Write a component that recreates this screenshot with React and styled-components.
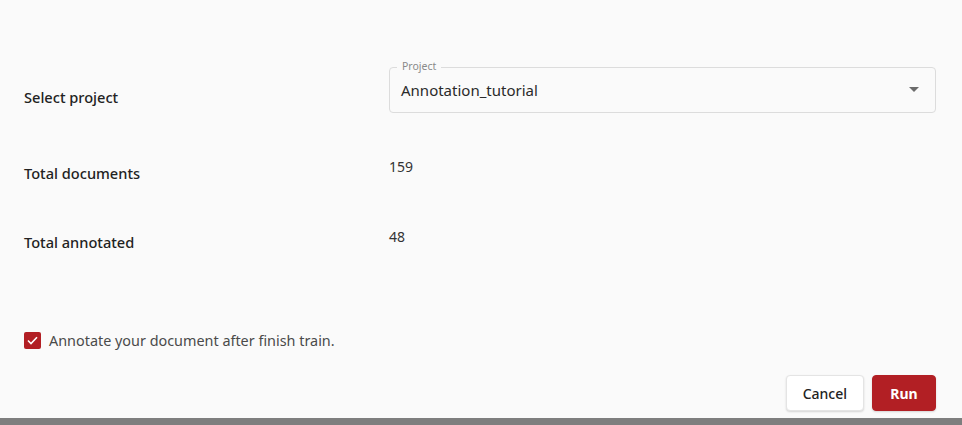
import React from "react";
import styled, { createGlobalStyle } from "styled-components";

const GlobalStyle = createGlobalStyle`
  html, body {
    margin: 0;
    padding: 0;
    background: #7e7e7e;
  }
  body {
    font-family: "Noto Sans", "Open Sans", Arial, sans-serif;
  }
`;

const Dialog = styled.div`
  box-sizing: border-box;
  width: 962px;
  height: 418px;
  background: #fafafa;
  padding: 67px 26px 7px 24px;
  display: flex;
  flex-direction: column;
`;

const Rows = styled.div`
  display: flex;
  flex-direction: column;
  gap: 44px;
`;

const Row = styled.div`
  display: flex;
  align-items: ${(p) => (p.center ? "center" : "flex-start")};
`;

const Label = styled.div`
  width: 365px;
  flex-shrink: 0;
  font-size: 14.6px;
  font-weight: 500;
  line-height: 20px;
  color: #222;
  padding-top: ${(p) => p.offset || 0}px;
`;

const Value = styled.div`
  font-size: 14px;
  line-height: 20px;
  color: #333;
`;

const SelectBox = styled.div`
  position: relative;
  flex: 1;
  height: 46px;
  box-sizing: border-box;
  border: 1px solid #dcdcdc;
  border-radius: 4px;
  display: flex;
  align-items: center;
  padding: 0 11px;
  font-size: 15px;
  color: #2a2a2a;
`;

const Legend = styled.span`
  position: absolute;
  top: -10px;
  left: 7px;
  padding: 0 5px;
  background: #fafafa;
  font-size: 10.5px;
  line-height: 16px;
  color: #8a8a8a;
`;

const Arrow = styled.svg`
  position: absolute;
  right: 16px;
  top: 19px;
`;

const CheckRow = styled.label`
  display: flex;
  align-items: center;
  gap: 8px;
  margin-top: 79px;
  font-size: 14.4px;
  color: #4a4a4a;
`;

const Box = styled.span`
  width: 17px;
  height: 17px;
  border-radius: 2px;
  background: #b21f24;
  display: flex;
  align-items: center;
  justify-content: center;
`;

const Footer = styled.div`
  margin-top: auto;
  display: flex;
  justify-content: flex-end;
  gap: 8px;
`;

const Button = styled.button`
  height: 36px;
  box-sizing: border-box;
  padding: 0 16px;
  border-radius: 4px;
  font-family: inherit;
  font-size: 14px;
  cursor: pointer;
  border: 1px solid ${(p) => (p.primary ? "#b21f24" : "#e4e4e4")};
  background: ${(p) => (p.primary ? "#b21f24" : "#ffffff")};
  color: ${(p) => (p.primary ? "#ffffff" : "#222")};
  font-weight: ${(p) => (p.primary ? 700 : 500)};
  min-width: ${(p) => (p.primary ? 64 : 75)}px;
  box-shadow: 0 1px 2px rgba(0, 0, 0, 0.15);
`;

export default function App() {
  return (
    <>
      <GlobalStyle />
      <Dialog>
        <Rows>
          <Row center>
            <Label offset={14}>Select project</Label>
            <SelectBox>
              <Legend>Project</Legend>
              Annotation_tutorial
              <Arrow width="10" height="5" viewBox="0 0 10 5">
                <path d="M0 0h10L5 5z" fill="#6b6b6b" />
              </Arrow>
            </SelectBox>
          </Row>
          <Row>
            <Label offset={6}>Total documents</Label>
            <Value>159</Value>
          </Row>
          <Row>
            <Label offset={5}>Total annotated</Label>
            <Value>48</Value>
          </Row>
        </Rows>
        <CheckRow>
          <Box>
            <svg width="11" height="9" viewBox="0 0 11 9">
              <path d="M1 4.5l3 3L10 1.2" fill="none" stroke="#fff" strokeWidth="1.6" />
            </svg>
          </Box>
          Annotate your document after finish train.
        </CheckRow>
        <Footer>
          <Button>Cancel</Button>
          <Button primary>Run</Button>
        </Footer>
      </Dialog>
    </>
  );
}
